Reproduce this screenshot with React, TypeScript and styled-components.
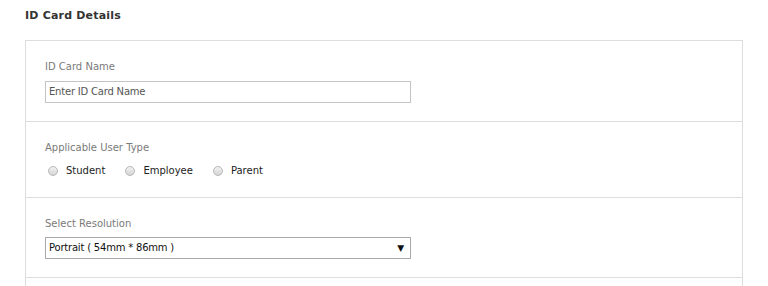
import React from 'react';
import styled, { createGlobalStyle } from 'styled-components';

const GlobalStyle = createGlobalStyle`
  body {
    margin: 0;
    background: #ffffff;
    font-family: "Comic Sans MS", "DejaVu Sans", sans-serif;
  }
`;

const Page = styled.div`
  padding: 9px 25px 0 25px;
  width: 718px;
`;

const Title = styled.h3`
  margin: 0 0 17px 0;
  font-size: 11px;
  line-height: 14px;
  font-weight: bold;
  color: #333333;
  letter-spacing: 0.2px;
`;

const Card = styled.div`
  border: 1px solid #dddddd;
  border-bottom: none;
`;

const Section = styled.div<{ $bottom?: number }>`
  padding: 19px 19px ${props => props.$bottom ?? 18}px 19px;
  border-bottom: 1px solid #dddddd;
`;

const OpenSection = styled.div`
  height: 8px;
`;

const Label = styled.div`
  font-size: 10px;
  line-height: 14px;
  color: #7a7a7a;
  margin-bottom: 6px;
`;

const TextInput = styled.input`
  box-sizing: border-box;
  width: 366px;
  height: 22px;
  border: 1px solid #c4c4c4;
  padding: 0 3px;
  font-family: inherit;
  font-size: 10px;
  letter-spacing: -0.2px;
  color: #444444;
  outline: none;
  &::placeholder {
    color: #555555;
  }
`;

const RadioRow = styled.div`
  display: flex;
  align-items: center;
  height: 20px;
  padding-left: 3px;
  gap: 20px;
`;

const RadioOption = styled.label`
  display: flex;
  align-items: center;
  gap: 8px;
  font-size: 10px;
  color: #222222;
`;

const RadioDot = styled.span`
  display: inline-block;
  width: 8px;
  height: 8px;
  border-radius: 50%;
  border: 1px solid #b8b8b8;
  background: linear-gradient(#f2f2f2, #d4d4d4);
`;

const SelectBox = styled.div`
  box-sizing: border-box;
  width: 366px;
  height: 22px;
  border: 1px solid #aaaaaa;
  display: flex;
  align-items: center;
  justify-content: space-between;
  padding: 0 6px 0 3px;
  font-size: 10px;
  letter-spacing: -0.2px;
  color: #111111;
`;

const Arrow = styled.span`
  font-family: "DejaVu Sans", sans-serif;
  font-size: 9px;
  color: #111111;
`;

const userTypes = ['Student', 'Employee', 'Parent'];

const App: React.FC = () => {
  return (
    <>
      <GlobalStyle />
      <Page>
        <Title>ID Card Details</Title>
        <Card>
          <Section>
            <Label>ID Card Name</Label>
            <TextInput placeholder="Enter ID Card Name" />
          </Section>
          <Section $bottom={16}>
            <Label>Applicable User Type</Label>
            <RadioRow>
              {userTypes.map(type => (
                <RadioOption key={type}>
                  <RadioDot />
                  {type}
                </RadioOption>
              ))}
            </RadioRow>
          </Section>
          <Section>
            <Label>Select Resolution</Label>
            <SelectBox>
              <span>Portrait ( 54mm * 86mm )</span>
              <Arrow>▼</Arrow>
            </SelectBox>
          </Section>
          <OpenSection />
        </Card>
      </Page>
    </>
  );
};

export default App;
